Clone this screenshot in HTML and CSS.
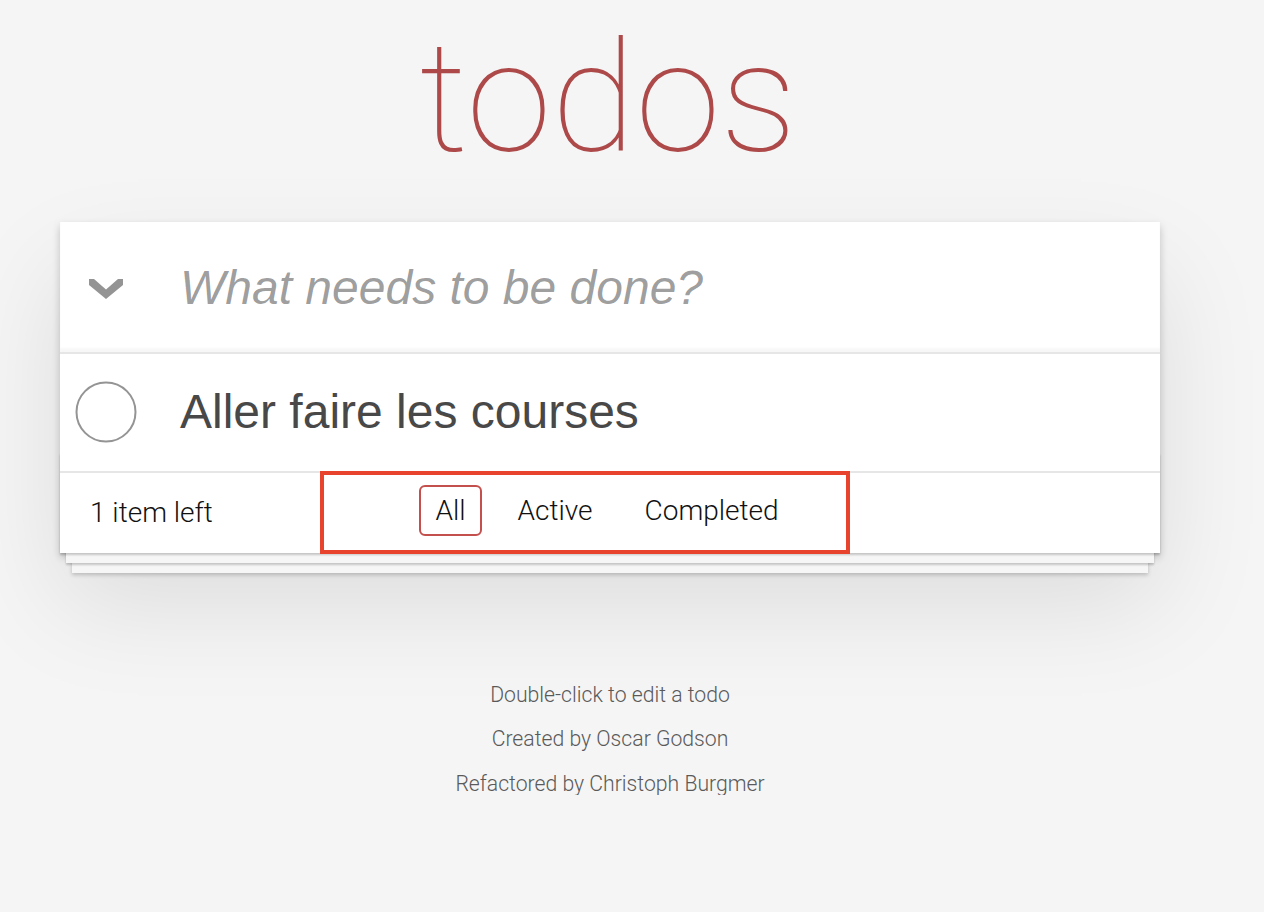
FILE: index.html
```html
<!DOCTYPE html>
<html lang="en">
<head>
<meta charset="utf-8">
<title>todos</title>
<link rel="stylesheet" href="styles.css">
</head>
<body>
<div class="page">
  <section class="app-wrap">
    <h1 class="title">todos</h1>
    <div class="todoapp">
      <header class="header">
        <div class="toggle-all">
          <svg width="34" height="20" viewBox="0 0 34 20"><polygon points="0,0 5,0 17,10.5 29,0 34,0 34,6 17,20 0,6" fill="#949494"/></svg>
        </div>
        <div class="new-todo">What needs to be done?</div>
      </header>
      <section class="main">
        <ul class="todo-list">
          <li class="todo">
            <span class="toggle">
              <svg width="62" height="62" viewBox="0 0 62 62"><circle cx="31" cy="31" r="29.5" fill="none" stroke="#949494" stroke-width="2"/></svg>
            </span>
            <label class="todo-label">Aller faire les courses</label>
          </li>
        </ul>
      </section>
      <footer class="footer">
        <span class="todo-count">1 item left</span>
        <ul class="filters">
          <li><a class="filter selected">All</a></li>
          <li><a class="filter">Active</a></li>
          <li><a class="filter">Completed</a></li>
        </ul>
        <span class="spacer"></span>
      </footer>
      <div class="highlight"></div>
    </div>
    <footer class="info">
      <p>Double-click to edit a todo</p>
      <p>Created by Oscar Godson</p>
      <p>Refactored by Christoph Burgmer</p>
    </footer>
  </section>
</div>
</body>
</html>
```

FILE: styles.css
```css
html, body {
  margin: 0;
  padding: 0;
}

body {
  background: #f5f5f5;
  color: #111111;
  font-family: "Roboto", "Liberation Sans", Arial, sans-serif;
  font-weight: 300;
}

.page {
  width: 1220px;
  padding-top: 19px;
}

.app-wrap {
  width: 1100px;
  margin: 0 auto;
}

.title {
  margin: 0 0 43px 0;
  height: 160px;
  font-size: 154px;
  line-height: 160px;
  font-weight: 100;
  color: #ad4949;
  text-align: center;
  padding-right: 4px;
}

.todoapp {
  position: relative;
  background: #ffffff;
  box-shadow: 0 4px 8px 0 rgba(0, 0, 0, 0.2), 0 50px 100px 0 rgba(0, 0, 0, 0.1);
}

.header {
  display: flex;
  align-items: center;
  height: 130px;
  box-shadow: inset 0 -4px 2px rgba(0, 0, 0, 0.03);
}

.toggle-all {
  width: 120px;
  display: flex;
  align-items: center;
  padding-left: 29px;
  padding-top: 4px;
  box-sizing: border-box;
}

.toggle-all svg {
  display: block;
}

.new-todo {
  font-family: "Liberation Sans", Arial, sans-serif;
  font-style: italic;
  font-weight: 400;
  font-size: 48px;
  color: rgba(0, 0, 0, 0.4);
}

.main {
  border-top: 2px solid #e6e6e6;
}

.todo-list {
  list-style: none;
  margin: 0;
  padding: 0;
}

.todo {
  display: flex;
  align-items: center;
}

.toggle {
  width: 120px;
  padding-left: 15px;
  box-sizing: border-box;
  display: flex;
  align-items: center;
}

.toggle svg {
  display: block;
}

.todo-label {
  font-family: "Liberation Sans", Arial, sans-serif;
  font-weight: 400;
  font-size: 48px;
  line-height: 57.6px;
  padding: 29px 0 30px;
  color: #484848;
}

.footer {
  position: relative;
  display: grid;
  grid-template-columns: 1fr auto 1fr;
  grid-template-rows: 40px;
  align-items: center;
  height: 40px;
  padding: 20px 30px;
  border-top: 2px solid #e6e6e6;
  font-size: 28px;
  line-height: 40px;
  color: #111111;
}

.footer::before {
  content: "";
  position: absolute;
  left: 0;
  right: 0;
  bottom: 0;
  height: 100px;
  box-shadow: 0 2px 2px rgba(0, 0, 0, 0.2),
              0 16px 0 -6px #f6f6f6,
              0 18px 2px -6px rgba(0, 0, 0, 0.2),
              0 32px 0 -12px #f6f6f6,
              0 34px 4px -12px rgba(0, 0, 0, 0.2);
  pointer-events: none;
}

.todo-count {
  position: relative;
}

.filters {
  position: relative;
  display: flex;
  gap: 8px;
  list-style: none;
  margin: -4px 0 0 -6px;
  padding: 0;
}

.filter {
  display: block;
  margin: 6px;
  padding: 6px 14px;
  border: 2px solid transparent;
  border-radius: 6px;
  line-height: 35px;
  color: #111111;
}

.filter.selected {
  border-color: #c4504d;
}

.highlight {
  position: absolute;
  left: 260px;
  top: 249px;
  width: 530px;
  height: 83px;
  box-sizing: border-box;
  border: 4px solid #e8432d;
  pointer-events: none;
}

.info {
  display: flex;
  flex-direction: column;
  align-items: center;
  gap: 22.5px;
  margin-top: 131px;
  font-size: 21.2px;
  line-height: 22px;
  color: #5a5a5a;
}

.info p {
  margin: 0;
}
```
